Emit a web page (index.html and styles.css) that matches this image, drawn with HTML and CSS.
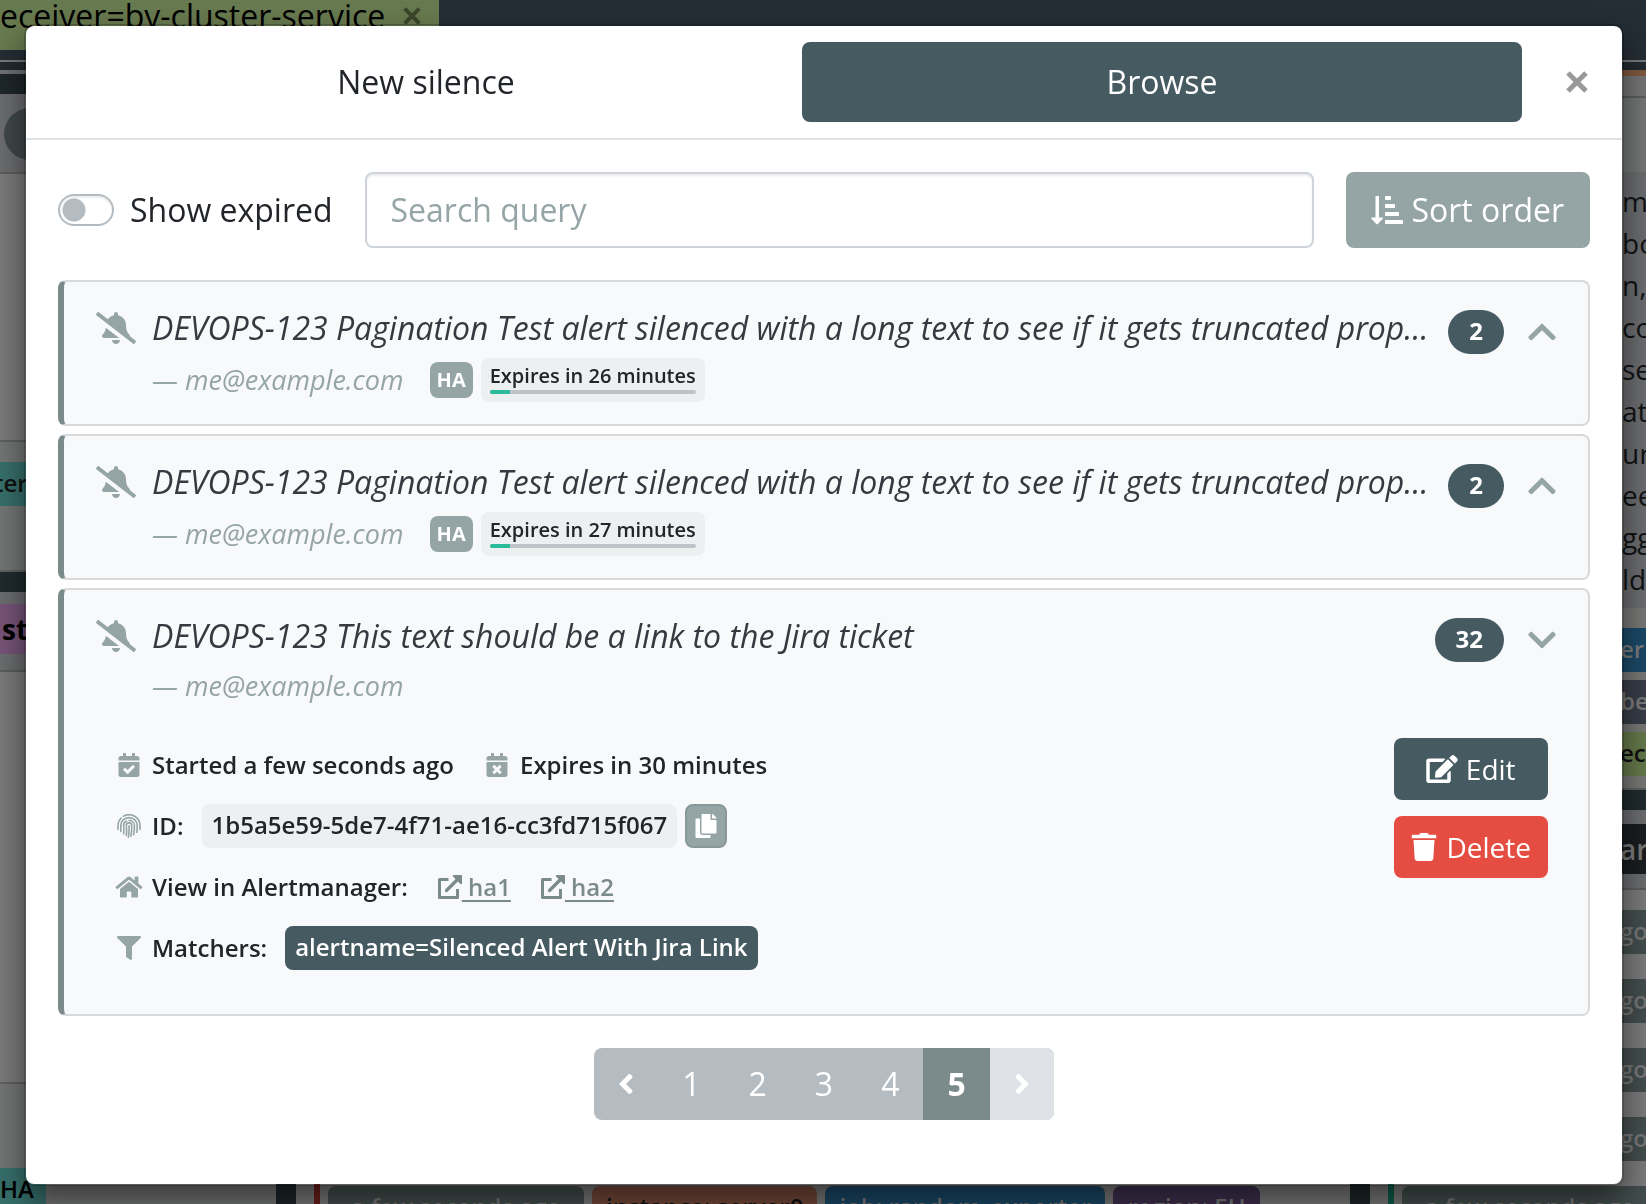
FILE: index.html
```html
<!DOCTYPE html>
<html lang="en">
<head>
<meta charset="utf-8">
<title>Silences</title>
<link rel="stylesheet" href="styles.css">
</head>
<body>
<svg class="sprite" aria-hidden="true">
  <symbol id="bell-slash" viewBox="0 0 640 512"><path d="M633.82 458.1l-90.62-70.05c.19-1.38.8-2.66.8-4.06.05-7.55-2.61-15.27-8.61-21.71-19.32-20.76-55.47-51.99-55.47-154.29 0-77.7-54.48-139.9-127.94-155.16V32c0-17.67-14.32-32-31.98-32s-31.98 14.33-31.98 32v20.84c-40.33 8.38-74.66 31.07-97.59 62.57L45.47 3.37C38.49-2.05 28.43-.8 23.01 6.18L3.37 31.45C-2.05 38.42-.8 48.47 6.18 53.9l588.35 454.73c6.98 5.43 17.03 4.17 22.46-2.81l19.64-25.27c5.42-6.97 4.17-17.02-2.81-22.45zM157.23 251.54c-8.61 67.96-36.41 93.33-52.62 110.75-6 6.45-8.66 14.16-8.61 21.71.11 16.4 12.98 32 32.1 32h241.92L157.23 251.54zM320 512c35.32 0 63.97-28.65 63.97-64H256.03c0 35.35 28.65 64 63.97 64z"/></symbol>
  <symbol id="chevron-up" viewBox="0 0 448 512"><path d="M240.971 130.524l194.343 194.343c9.373 9.373 9.373 24.569 0 33.941l-22.667 22.667c-9.357 9.357-24.522 9.375-33.901.04L224 227.495 69.255 381.516c-9.379 9.335-24.544 9.317-33.901-.04l-22.667-22.667c-9.373-9.373-9.373-24.569 0-33.941L207.03 130.525c9.372-9.373 24.568-9.373 33.941-.001z"/></symbol>
  <symbol id="chevron-down" viewBox="0 0 448 512"><path d="M207.029 381.476L12.686 187.132c-9.373-9.373-9.373-24.569 0-33.941l22.667-22.667c9.357-9.357 24.522-9.375 33.901-.04L224 284.505l154.745-154.021c9.379-9.335 24.544-9.317 33.901.04l22.667 22.667c9.373 9.373 9.373 24.569 0 33.941L240.971 381.476c-9.373 9.372-24.569 9.372-33.942 0z"/></symbol>
  <symbol id="angle-left" viewBox="0 0 256 512"><path d="M31.7 239l136-136c9.4-9.4 24.6-9.4 33.9 0l22.6 22.6c9.4 9.4 9.4 24.6 0 33.9L127.9 256l96.4 96.4c9.4 9.4 9.4 24.6 0 33.9L201.7 409c-9.4 9.4-24.6 9.4-33.9 0l-136-136c-9.5-9.4-9.5-24.6-.1-34z"/></symbol>
  <symbol id="angle-right" viewBox="0 0 256 512"><path d="M224.3 273l-136 136c-9.4 9.4-24.6 9.4-33.9 0l-22.6-22.6c-9.4-9.4-9.4-24.6 0-33.9l96.4-96.4-96.4-96.4c-9.4-9.4-9.4-24.6 0-33.9L54.3 103c9.4-9.4 24.6-9.4 33.9 0l136 136c9.5 9.4 9.5 24.6.1 34z"/></symbol>
  <symbol id="copy" viewBox="0 0 448 512"><path d="M320 448v40c0 13.255-10.745 24-24 24H24c-13.255 0-24-10.745-24-24V120c0-13.255 10.745-24 24-24h72v296c0 30.879 25.121 56 56 56h168zm0-344V0H152c-13.255 0-24 10.745-24 24v368c0 13.255 10.745 24 24 24h272c13.255 0 24-10.745 24-24V128H344c-13.2 0-24-10.8-24-24zm120.971-31.029L375.029 7.029A24 24 0 0 0 358.059 0H352v96h96v-6.059a24 24 0 0 0-7.029-16.97z"/></symbol>
  <symbol id="edit" viewBox="0 0 576 512"><path d="M402.6 83.2l90.2 90.2c3.8 3.8 3.8 10 0 13.8L274.4 405.6l-92.8 10.3c-12.4 1.4-22.9-9.1-21.5-21.5l10.3-92.8L388.8 83.2c3.8-3.8 10-3.8 13.8 0zm162-22.9l-48.8-48.8c-15.2-15.2-39.9-15.2-55.2 0l-35.4 35.4c-3.8 3.8-3.8 10 0 13.8l90.2 90.2c3.8 3.8 10 3.8 13.8 0l35.4-35.4c15.2-15.3 15.2-40 0-55.2zM384 346.2V448H64V128h229.8c3.2 0 6.2-1.3 8.5-3.5l40-40c7.6-7.6 2.2-20.5-8.5-20.5H48C21.5 64 0 85.5 0 112v352c0 26.5 21.5 48 48 48h352c26.5 0 48-21.5 48-48V306.2c0-10.7-12.9-16-20.5-8.5l-40 40c-2.2 2.3-3.5 5.3-3.5 8.5z"/></symbol>
  <symbol id="trash" viewBox="0 0 448 512"><path d="M432 32H312l-9.4-18.7A24 24 0 0 0 281.1 0H166.8a23.72 23.72 0 0 0-21.4 13.3L136 32H16A16 16 0 0 0 0 48v32a16 16 0 0 0 16 16h416a16 16 0 0 0 16-16V48a16 16 0 0 0-16-16zM53.2 467a48 48 0 0 0 47.9 45h245.8a48 48 0 0 0 47.9-45L416 128H32z"/></symbol>
  <symbol id="filter" viewBox="0 0 512 512"><path d="M487.976 0H24.028C2.71 0-8.047 25.866 7.058 40.971L192 225.941V432c0 7.831 3.821 15.17 10.237 19.662l80 55.98C298.02 518.69 320 507.493 320 487.98V225.941l184.947-184.97C520.021 25.896 509.338 0 487.976 0z"/></symbol>
  <symbol id="home" viewBox="0 0 576 512"><path d="M280.37 148.26L96 300.11V464a16 16 0 0 0 16 16l112.06-.29a16 16 0 0 0 15.92-16V368a16 16 0 0 1 16-16h64a16 16 0 0 1 16 16v95.64a16 16 0 0 0 16 16.05L464 480a16 16 0 0 0 16-16V300L295.67 148.26a12.19 12.19 0 0 0-15.3 0zM571.6 251.47L488 182.56V44.05a12 12 0 0 0-12-12h-56a12 12 0 0 0-12 12v72.61L318.47 43a48 48 0 0 0-61 0L4.34 251.47a12 12 0 0 0-1.6 16.9l25.5 31A12 12 0 0 0 45.15 301l235.22-193.74a12.19 12.19 0 0 1 15.3 0L530.9 301a12 12 0 0 0 16.9-1.6l25.5-31a12 12 0 0 0-1.7-16.93z"/></symbol>
  <symbol id="calendar-check" viewBox="0 0 448 512"><path d="M436 160H12c-6.627 0-12-5.373-12-12v-36c0-26.51 21.49-48 48-48h48V12c0-6.627 5.373-12 12-12h40c6.627 0 12 5.373 12 12v52h128V12c0-6.627 5.373-12 12-12h40c6.627 0 12 5.373 12 12v52h48c26.51 0 48 21.49 48 48v36c0 6.627-5.373 12-12 12zM12 192h424c6.627 0 12 5.373 12 12v260c0 26.51-21.49 48-48 48H48c-26.51 0-48-21.49-48-48V204c0-6.627 5.373-12 12-12zm333.296 95.947l-28.169-28.398c-4.667-4.705-12.265-4.736-16.97-.068L194.12 364.665l-45.98-46.352c-4.667-4.705-12.266-4.736-16.971-.068l-28.397 28.17c-4.705 4.667-4.736 12.265-.068 16.97l82.601 83.269c4.667 4.705 12.265 4.736 16.97.068l142.953-141.805c4.705-4.667 4.736-12.265.068-16.97z"/></symbol>
  <symbol id="calendar-times" viewBox="0 0 448 512"><path fill-rule="evenodd" d="M436 160H12c-6.627 0-12-5.373-12-12v-36c0-26.51 21.49-48 48-48h48V12c0-6.627 5.373-12 12-12h40c6.627 0 12 5.373 12 12v52h128V12c0-6.627 5.373-12 12-12h40c6.627 0 12 5.373 12 12v52h48c26.51 0 48 21.49 48 48v36c0 6.627-5.373 12-12 12zM12 192h424c6.627 0 12 5.373 12 12v260c0 26.51-21.49 48-48 48H48c-26.51 0-48-21.49-48-48V204c0-6.627 5.373-12 12-12zM269.300 352l48.100-48.100c4.700-4.700 4.700-12.300 0-17l-28.300-28.300c-4.700-4.700-12.300-4.700-17 0L224 306.700l-48.100-48.100c-4.700-4.700-12.300-4.700-17 0l-28.300 28.300c-4.700 4.700-4.700 12.300 0 17l48.100 48.100-48.100 48.100c-4.700 4.700-4.700 12.300 0 17l28.300 28.300c4.700 4.700 12.300 4.700 17 0l48.100-48.100 48.100 48.100c4.700 4.700 12.300 4.700 17 0l28.300-28.300c4.700-4.700 4.700-12.300 0-17L269.300 352z"/></symbol>
  <symbol id="times" viewBox="0 0 22 22"><path d="M2 2L20 20M20 2L2 20" fill="none" stroke="currentColor" stroke-width="5"/></symbol>
  <symbol id="fingerprint" viewBox="0 0 24 24"><g fill="none" stroke="currentColor" stroke-width="1.6" stroke-linecap="round"><path d="M1 15.500V11.500A11 10.700 0 0 1 4.200 4M6.500 2.200A11 10.700 0 0 1 23 11.500V15.500"/><path d="M3.800 17.500V11.500A8.200 7.900 0 0 1 12 3.600A8.200 7.900 0 0 1 20.200 11.500Q20.300 15 19.800 18.300"/><path d="M6.600 19.800Q7.100 15.600 6.600 11.500A5.400 5.100 0 0 1 9.500 7M12.200 6.400A5.400 5.100 0 0 1 17.400 11.500Q17.500 16.400 16.600 20.800"/><path d="M9.300 21.400Q10 16.600 9.300 11.500A2.700 2.600 0 0 1 14.700 11.500Q14.900 17 13.900 22.200"/><path d="M12 11.800Q12.300 18 11.400 23.200"/></g></symbol>
  <symbol id="external" viewBox="0 0 24 24"><path fill="none" stroke="currentColor" stroke-width="3" stroke-linejoin="round" d="M10.500 4.500H1.500V22.500H19.500V14"/><path fill="none" stroke="currentColor" stroke-width="3.200" stroke-linecap="round" d="M8.500 15.500L20 4"/><path d="M15.500 0H23a1 1 0 0 1 1 1V8.500q-.4 1-1.500.5L15 1.500q-.4-1 .5-1.500z"/></symbol>
  <symbol id="sort" viewBox="0 0 32 32"><path d="M4.500 2.500q0-.5.500-.5h2.500q.5 0 .5.500V23.500h3.300q1 .3.500 1.300L6.800 30q-.8.600-1.500 0L.4 24.800q-.7-1 .5-1.300h3.600z"/><rect x="14" y="2" width="6" height="4" rx=".8"/><rect x="14" y="10" width="10" height="4" rx=".8"/><rect x="14" y="18" width="14" height="4" rx=".8"/><rect x="14" y="26" width="18" height="4" rx=".8"/></symbol>
</svg>

<div class="backdrop" aria-hidden="true">
  <div class="navbar"><span class="token">eceiver=by-cluster-service <svg class="token-x"><use href="#times"/></svg></span></div>
  <div class="stripes"></div>
  <div class="board">
    <div class="column column-left">
      <div class="panel-head"><span class="dot"></span></div>
      <div class="panel-body tall"></div>
      <div class="panel-foot"><span class="chip teal cluster-tag">ter</span></div>
      <div class="gutter"></div>
      <div class="panel-head compact"><span class="chip violet">st</span></div>
      <div class="panel-body long"></div>
      <div class="panel-foot last"><span class="chip teal ha">HA</span></div>
    </div>
    <div class="column column-mid">
      <div class="bottom-row edge-red"><span class="pill slate wide">a few seconds ago</span><span class="pill rust">instance: server0</span><span class="pill blue">job: random_exporter</span><span class="pill plum">region: EU</span></div>
    </div>
    <div class="column column-right">
      <div class="warn-line"></div>
      <div class="panel-title"></div>
      <div class="panel-gap"></div>
      <div class="notes"><p>m</p><p>bo</p><p>n, c</p><p>co</p><p>se</p><p>at</p><p>ur</p><p>ee</p><p>gg</p><p>lde</p></div>
      <div class="tags"><span class="chip blue">er</span><span class="chip ink">be</span><span class="chip olive">ec</span></div>
      <div class="gutter"></div>
      <div class="group-head"><span class="chip black">ar</span></div>
      <div class="times"><span class="chip slate">go</span><span class="chip slate">go</span><span class="chip slate">go</span><span class="chip slate">go</span></div>
      <div class="bottom-row edge-green"><span class="pill slate wide">a few seconds ago</span></div>
    </div>
  </div>
</div>

<main class="modal" role="dialog" aria-label="Silences">
  <header class="modal-head">
    <nav class="tabs">
      <button class="tab" type="button">New silence</button>
      <button class="tab active" type="button">Browse</button>
    </nav>
    <button class="close" type="button" aria-label="Close"><svg><use href="#times"/></svg></button>
  </header>

  <div class="modal-body">
    <form class="toolbar">
      <label class="switch"><input type="checkbox">Show expired</label>
      <input class="search" type="text" placeholder="Search query" aria-label="Search query">
      <button class="sort" type="button"><svg class="i32"><use href="#sort"/></svg>Sort order</button>
    </form>

    <section class="list">
      <article class="card">
        <div class="card-head">
          <svg class="bell"><use href="#bell-slash"/></svg>
          <h2 class="title">DEVOPS-123 Pagination Test alert silenced with a long text to see if it gets truncated properly</h2>
          <span class="count">2</span>
          <button class="toggle" type="button" aria-label="Expand"><svg><use href="#chevron-up"/></svg></button>
        </div>
        <div class="meta"><cite>— me@example.com</cite><span class="cluster">HA</span><span class="expiry">Expires in 26 minutes<span class="bar"><span class="fill" style="width:10%"></span></span></span></div>
      </article>

      <article class="card">
        <div class="card-head">
          <svg class="bell"><use href="#bell-slash"/></svg>
          <h2 class="title">DEVOPS-123 Pagination Test alert silenced with a long text to see if it gets truncated properly</h2>
          <span class="count">2</span>
          <button class="toggle" type="button" aria-label="Expand"><svg><use href="#chevron-up"/></svg></button>
        </div>
        <div class="meta"><cite>— me@example.com</cite><span class="cluster">HA</span><span class="expiry">Expires in 27 minutes<span class="bar"><span class="fill" style="width:10%"></span></span></span></div>
      </article>

      <article class="card">
        <div class="card-head">
          <svg class="bell"><use href="#bell-slash"/></svg>
          <h2 class="title">DEVOPS-123 This text should be a link to the Jira ticket</h2>
          <span class="count">32</span>
          <button class="toggle" type="button" aria-label="Collapse"><svg><use href="#chevron-down"/></svg></button>
        </div>
        <div class="meta"><cite>— me@example.com</cite></div>
        <div class="details">
          <div class="facts">
            <div class="fact"><svg class="fw"><use href="#calendar-check"/></svg><span>Started a few seconds ago</span><svg class="fw second"><use href="#calendar-times"/></svg><span>Expires in 30 minutes</span></div>
            <div class="fact"><svg class="fw"><use href="#fingerprint"/></svg><span>ID:</span><span class="code">1b5a5e59-5de7-4f71-ae16-cc3fd715f067</span><button class="copy" type="button" aria-label="Copy ID"><svg><use href="#copy"/></svg></button></div>
            <div class="fact"><svg class="fw"><use href="#home"/></svg><span>View in Alertmanager:</span><a class="link" href="#ha1"><svg><use href="#external"/></svg>&nbsp;ha1</a><a class="link" href="#ha2"><svg><use href="#external"/></svg>&nbsp;ha2</a></div>
            <div class="fact"><svg class="fw"><use href="#filter"/></svg><span>Matchers:</span><span class="matcher">alertname=Silenced Alert With Jira Link</span></div>
          </div>
          <div class="actions">
            <button class="action" type="button"><svg class="i-edit"><use href="#edit"/></svg>Edit</button>
            <button class="action danger" type="button"><svg class="i-trash"><use href="#trash"/></svg>Delete</button>
          </div>
        </div>
      </article>
    </section>

    <nav class="pages" aria-label="Pages">
      <button type="button" aria-label="Previous"><svg><use href="#angle-left"/></svg></button><button type="button">1</button><button type="button">2</button><button type="button">3</button><button type="button">4</button><button class="current" type="button">5</button><button type="button" disabled aria-label="Next"><svg><use href="#angle-right"/></svg></button>
    </nav>
  </div>
</main>
</body>
</html>
```
FILE: styles.css
```css
* { box-sizing: border-box; }

body {
  margin: 0;
  min-height: 100vh;
  padding: 24px;
  overflow: hidden;
  font: 32px/48px "Open Sans", "Noto Sans", sans-serif;
  color: #212529;
  background: #7b7b7b;
}

button, input { font: inherit; color: inherit; margin: 0; }
button { border: 0; padding: 0; background: none; cursor: pointer; }
svg { fill: currentColor; flex: none; display: block; }
.sprite { position: absolute; width: 0; height: 0; }

/* dimmed page behind the dialog */
.backdrop {
  position: fixed;
  inset: 0;
  overflow: hidden;
  display: flex;
  flex-direction: column;
  background: #252d35;
}
.navbar { height: 60px; flex: none; }
.token {
  display: flex;
  width: max-content;
  align-items: center;
  gap: 18px;
  height: 50px;
  padding: 0 18px 18px 0;
  background: #687a4f;
  color: #000;
  line-height: 32px;
  white-space: nowrap;
}
.token-x { width: 18px; height: 18px; color: #3b462c; }
.stripes {
  height: 14px;
  flex: none;
  border-top: 2px solid #777b7e;
  border-bottom: 4px solid #6f7274;
  background: #232b30;
}
.board { flex: 1; display: flex; background: #1e272b; gap: 20px; min-height: 0; }
.column { display: flex; flex-direction: column; min-height: 0; background: #7b7b7b; }
.column-left { width: 276px; flex: none; border-top: 20px solid #1e272b; }
.column-mid { flex: 1; justify-content: flex-end; }
.column-right { width: 276px; flex: none; margin-top: -4px; }
.column > * { flex: none; }
.panel-head { height: 80px; padding: 14px 4px; background: #6c6d6f; border-bottom: 2px solid #5c5e5e; }
.panel-head.compact { padding: 12px 0; }
.dot { display: block; width: 52px; height: 52px; border-radius: 50%; background: #404948; }
.panel-body.tall { height: 266px; }
.panel-body.long { height: 410px; }
.panel-foot { height: 132px; padding-top: 20px; background: #747675; border-top: 2px solid #5f6160; border-bottom: 2px solid #5f6160; }
.panel-foot.last { height: 200px; padding-top: 84px; }
.gutter { height: 20px; background: #202a2e; }
.chip { display: block; height: 44px; line-height: 42px; font-size: 24px; font-weight: 600; white-space: nowrap; overflow: hidden; }
.teal { background: #37706c; color: #111; width: 90px; }
.cluster-tag { text-indent: -6px; }
.teal.ha { width: 46px; color: #000; }
.violet { height: 50px; line-height: 50px; padding-left: 2px; width: 90px; background: #77547a; color: #000; font-size: 28px; font-weight: 700; }
.bottom-row { height: 22px; display: flex; gap: 8px; padding: 4px 0 0 8px; margin-left: 18px; overflow: hidden; }
.edge-red { border-left: 6px solid #6d1f1b; }
.edge-green { border-left: 6px solid #0e5f4b; }
.column-right .bottom-row { margin-top: auto; }
.pill { height: 44px; flex: none; padding: 0 14px; border-radius: 8px; font-size: 24px; line-height: 42px; font-weight: 600; white-space: nowrap; }
.pill.wide { width: 256px; text-align: center; }
.slate { background: #444e4e; color: #777; }
.rust { background: #75493a; color: #111; }
.blue { background: #1b4968; color: #7b7b7b; }
.plum { background: #40304f; color: #7b7b7b; }
.warn-line { height: 6px; background: #80593f; }
.panel-title { height: 22px; background: #757575; border-bottom: 2px solid #5c5e5e; }
.panel-gap { height: 74px; background: #747775; }
.notes { height: 436px; padding: 8px 0 0 252px; background: #6c6d70; font-size: 28px; line-height: 42px; color: #111314; white-space: nowrap; }
.notes p { margin: 0; }
.tags { height: 182px; display: flex; flex-direction: column; gap: 8px; padding-top: 20px; background: #777876; border-bottom: 2px solid #5f6160; }
.column-right .chip { padding-left: 250px; }
.ink { background: #383d48; color: #7b7b7b; }
.olive { background: #65794b; color: #111; }
.group-head { height: 80px; padding: 14px 0; background: #6c6d6f; border-bottom: 2px solid #5c5e5e; }
.column-right .black { height: 50px; line-height: 50px; background: #1a1e20; color: #7b7b7b; font-size: 28px; }
.times { display: flex; flex-direction: column; gap: 25px; padding-top: 20px; }

/* dialog */
.modal {
  position: relative;
  min-height: calc(100vh - 44px);
  border: 2px solid rgba(0, 0, 0, .2);
  border-radius: 10px;
  background: #fff;
  background-clip: padding-box;
  box-shadow: 0 16px 32px rgba(0, 0, 0, .5);
  margin-right: -2px;
}
.modal-head {
  display: flex;
  align-items: center;
  padding: 16px 32px 16px 24px;
  border-bottom: 2px solid #dee2e6;
}
.tabs { flex: 1; display: grid; grid-template-columns: 752fr 720fr; }
.tab { height: 80px; border-radius: 8px; }
.tab.active { background: #465a62; color: #fff; }
.close { margin-left: 42px; width: 26px; height: 26px; padding: 2px; color: #999; }
.close svg { width: 22px; height: 22px; }

.modal-body { padding: 32px 32px 64px; }
.toolbar { display: flex; align-items: center; gap: 32px; margin-bottom: 32px; }
.switch { display: flex; align-items: center; gap: 16px; white-space: nowrap; }
.switch input {
  appearance: none;
  width: 56px;
  height: 32px;
  border: 2px solid #b4bcc2;
  border-radius: 16px;
  background: #fff radial-gradient(circle at 14px 14px, #b4bcc2 11px, transparent 12px);
  box-shadow: inset 0 2px 2px rgba(0, 0, 0, .08);
}
.search {
  flex: 1;
  min-width: 0;
  height: 76px;
  padding: 0 24px 2px;
  border: 2px solid #ced4da;
  border-radius: 8px;
  background: #fff;
  box-shadow: inset 0 2px 2px rgba(0, 0, 0, .08);
}
.search::placeholder { color: #95a5a6; opacity: 1; }
.sort {
  display: flex;
  align-items: center;
  justify-content: center;
  gap: 8px;
  height: 76px;
  padding: 0 26px 0 25px;
  border-radius: 8px;
  background: #95a5a6;
  color: #fff;
}
.i32 { width: 32px; height: 32px; }

.list { display: flex; flex-direction: column; gap: 8px; }
.card {
  padding: 22px 32px;
  border: 2px solid #d7d9da;
  border-left: 6px solid #7b8a8b;
  border-radius: 8px;
  background: #f8f9fb;
}
.card-head { display: flex; align-items: center; height: 48px; color: #95a5a6; }
.bell { width: 40px; height: 32px; margin-right: 16px; }
.title {
  flex: 1;
  min-width: 0;
  margin: 0;
  overflow: hidden;
  text-overflow: ellipsis;
  white-space: nowrap;
  font-size: 32px;
  font-weight: 400;
  font-style: italic;
  color: #343a40;
}
.count {
  margin: 8px 24px 0 16px;
  height: 44px;
  padding: 0 21px;
  border-radius: 22px;
  background: #465a62;
  color: #fff;
  font-size: 24px;
  line-height: 42px;
  font-weight: 700;
}
.toggle { margin-top: 8px; }
.toggle svg { width: 28px; height: 32px; }
.meta { display: flex; align-items: center; margin: 6px 0 0 56px; }
.meta cite { font-size: 27px; line-height: 40px; color: #95a5a6; }
.cluster {
  margin: 0 8px 0 26px;
  height: 36px;
  padding: 0 7px;
  border-radius: 8px;
  background: #95a5a6;
  color: #fff;
  font-size: 20px;
  line-height: 36px;
  font-weight: 700;
}
.expiry { height: 44px; padding: 4px 9px 0; border-radius: 8px; background: #ecf0f1; font-size: 20px; line-height: 28px; font-weight: 600; }
.bar { display: block; height: 4px; border-radius: 2px; background: #bdc3c7; overflow: hidden; }
.fill { display: block; height: 4px; background: #2abb9b; }

.details { display: flex; justify-content: space-between; align-items: flex-start; padding: 32px 8px 22px 18px; }
.facts { display: flex; flex-direction: column; gap: 17px; padding-top: 5px; font-size: 24px; line-height: 44px; font-weight: 600; }
.fact { display: flex; align-items: center; height: 44px; white-space: nowrap; }
.fw { width: 30px; height: 24px; margin-right: 8px; color: #95a5a6; }
.fw.second { margin-left: 28px; }
.code, .matcher { height: 44px; padding: 0 10px; border-radius: 8px; line-height: 42px; margin-left: 18px; }
.code { background: #ecf0f1; }
.matcher { background: #465a62; color: #fff; }
.copy { width: 42px; height: 44px; margin-left: 8px; display: grid; place-items: center; border: 2px solid #889899; border-radius: 8px; background: #95a5a6; color: #fff; }
.copy svg { width: 24px; height: 24px; }
.link { display: flex; align-items: center; margin-left: 30px; color: #7b8a8b; text-underline-offset: 4px; text-decoration-thickness: 2px; }
.link svg { width: 24px; height: 24px; }
.actions { display: flex; flex-direction: column; gap: 16px; }
.action { display: flex; align-items: center; justify-content: center; gap: 8px; height: 62px; padding: 0 17px 0 16px; border-radius: 8px; background: #465a62; color: #fff; font-size: 28px; }
.danger { background: #e54d42; }
.i-edit { width: 32px; height: 28px; }
.i-trash { width: 28px; height: 28px; }

.pages { display: flex; width: max-content; margin: 32px auto 0; border-radius: 8px; overflow: hidden; background: #b4bcc2; color: #fff; }
.pages button { display: flex; align-items: center; height: 72px; padding: 0 24px; }
.pages svg { width: 16px; height: 32px; }
.pages .current { background: #7b8a8b; font-weight: 700; }
.pages button:disabled { background: #dee2e6; color: #fff; }
```
